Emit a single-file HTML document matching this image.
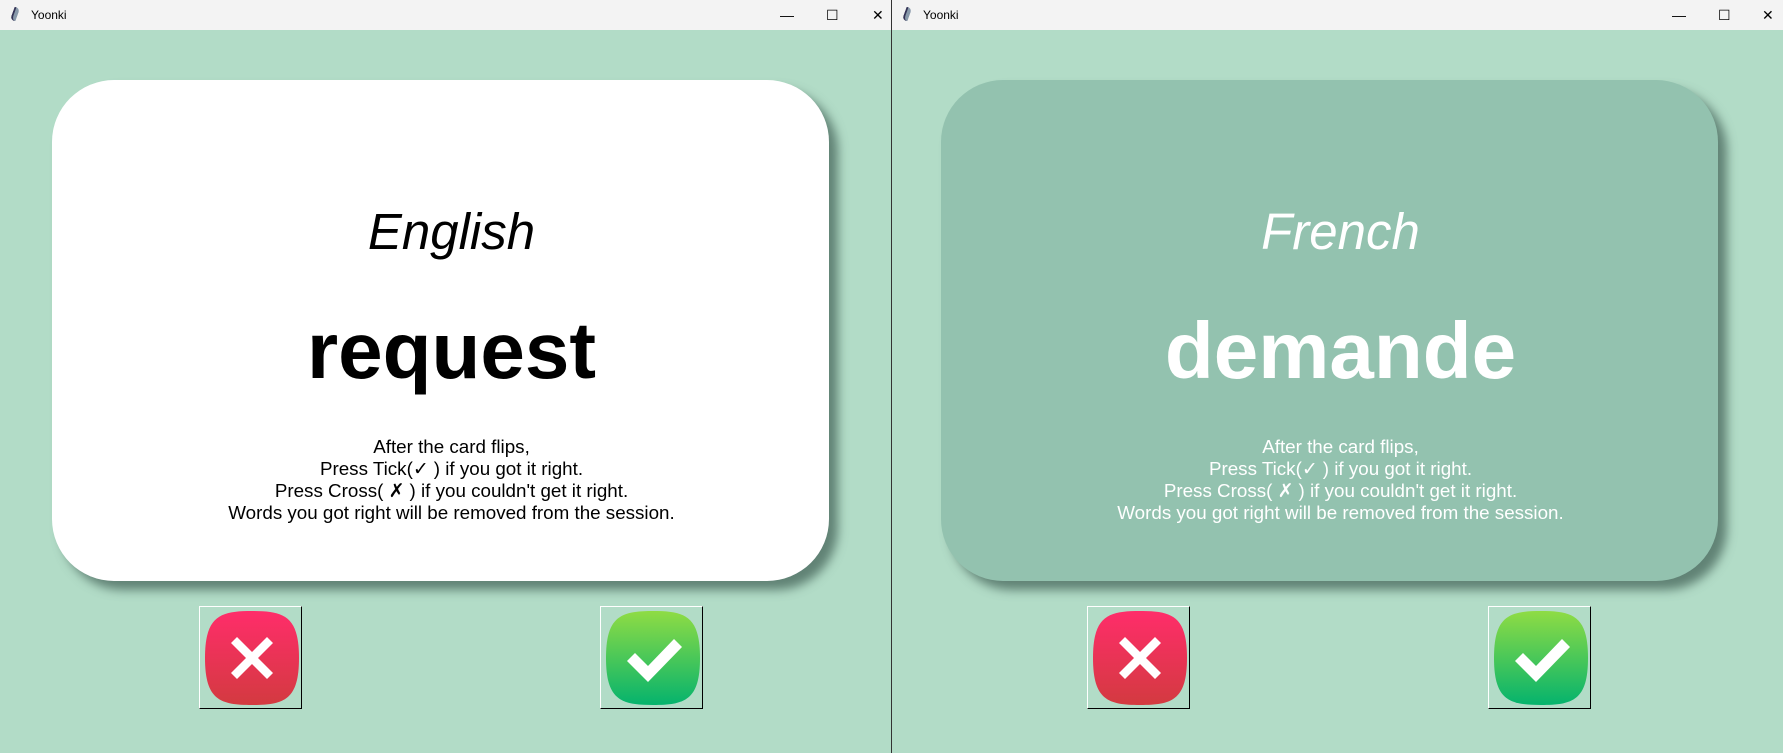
<!DOCTYPE html>
<html><head><meta charset="utf-8"><style>
*{margin:0;padding:0;box-sizing:border-box}
body{width:1783px;height:753px;background:#b2dcc7;position:relative;overflow:hidden;font-family:"Liberation Sans",Arial,sans-serif}
.win{position:absolute;top:0;height:753px;background:#b2dcc7}
.tb{position:absolute;left:0;right:0;top:0;height:30px;background:#f3f3f3;font-size:12px;color:#000}
.tb .t{position:absolute;left:31px;top:8px}
.tb .ic{position:absolute;left:12px;top:7px;width:6px;height:14px;border-left:2px solid #335;transform:skewX(-20deg);border-radius:0 8px 0 8px;background:#89a}
.ctl{position:absolute;top:7px;font-size:14px}
.card{position:absolute;top:80px;width:777px;height:501px;border-radius:62px;box-shadow:9px 9px 10px rgba(70,100,90,.75);text-align:center}
.lang,.word,.ins{position:absolute;left:22px;right:0}
.lang{top:122px;font-size:51px;font-style:italic;line-height:60px}
.word{top:223px;font-size:80px;font-weight:bold;line-height:96px}
.ins{top:356px;font-size:18.8px;line-height:22px}
.btn{position:absolute;top:606px;width:103px;height:103px;border:1px solid;border-color:#fff #000 #000 #fff}
.btn svg{position:absolute;left:4px;top:3px}
</style></head><body>

<div class="win" style="left:0;width:891px">
<div class="tb"><div class="ic"></div><span class="t">Yoonki</span>
<span class="ctl" style="left:780px">—</span><span class="ctl" style="left:826px">☐</span><span class="ctl" style="left:872px">✕</span></div>
<div class="card" style="left:52px;background:#fff;color:#000">
<div class="lang">English</div><div class="word">request</div>
<div class="ins">After the card flips,<br>Press Tick(✓ ) if you got it right.<br>Press Cross( ✗ ) if you couldn't get it right.<br>Words you got right will be removed from the session.</div>
</div>
</div>
<div style="position:absolute;left:891px;top:0;width:1px;height:753px;background:#333"></div>
<div class="win" style="left:892px;width:891px">
<div class="tb"><div class="ic"></div><span class="t">Yoonki</span>
<span class="ctl" style="left:780px">—</span><span class="ctl" style="left:826px">☐</span><span class="ctl" style="left:870px">✕</span></div>
<div class="card" style="left:49px;background:#93c2af;color:#fff">
<div class="lang">French</div><div class="word">demande</div>
<div class="ins">After the card flips,<br>Press Tick(✓ ) if you got it right.<br>Press Cross( ✗ ) if you couldn't get it right.<br>Words you got right will be removed from the session.</div>
</div>
</div>

<svg width="0" height="0" style="position:absolute"><defs>
<linearGradient id="r" x1="0" y1="0" x2="0" y2="1"><stop offset="0" stop-color="#ff2d6a"/><stop offset="1" stop-color="#d33a40"/></linearGradient>
<linearGradient id="g" x1="0" y1="0" x2="0" y2="1"><stop offset="0" stop-color="#8fdc44"/><stop offset="1" stop-color="#05b36d"/></linearGradient>
</defs></svg>

<div class="btn" style="left:199px"><svg width="96" height="96" viewBox="0 0 96 96"><path d="M48 1C80 1 95 6 95 48S80 95 48 95 1 90 1 48 16 1 48 1Z" fill="url(#r)"/><path d="M27 33l6-6 15 15 15-15 6 6-15 15 15 15-6 6-15-15-15 15-6-6 15-15z" fill="#fff"/></svg></div>
<div class="btn" style="left:600px"><svg width="96" height="96" viewBox="0 0 96 96"><path d="M48 1C80 1 95 6 95 48S80 95 48 95 1 90 1 48 16 1 48 1Z" fill="url(#g)"/><path d="M22 51l8-8 13 13 26-27 8 8-34 35z" fill="#fff"/></svg></div>
<div class="btn" style="left:1087px"><svg width="96" height="96" viewBox="0 0 96 96"><path d="M48 1C80 1 95 6 95 48S80 95 48 95 1 90 1 48 16 1 48 1Z" fill="url(#r)"/><path d="M27 33l6-6 15 15 15-15 6 6-15 15 15 15-6 6-15-15-15 15-6-6 15-15z" fill="#fff"/></svg></div>
<div class="btn" style="left:1488px"><svg width="96" height="96" viewBox="0 0 96 96"><path d="M48 1C80 1 95 6 95 48S80 95 48 95 1 90 1 48 16 1 48 1Z" fill="url(#g)"/><path d="M22 51l8-8 13 13 26-27 8 8-34 35z" fill="#fff"/></svg></div>
</body></html>
